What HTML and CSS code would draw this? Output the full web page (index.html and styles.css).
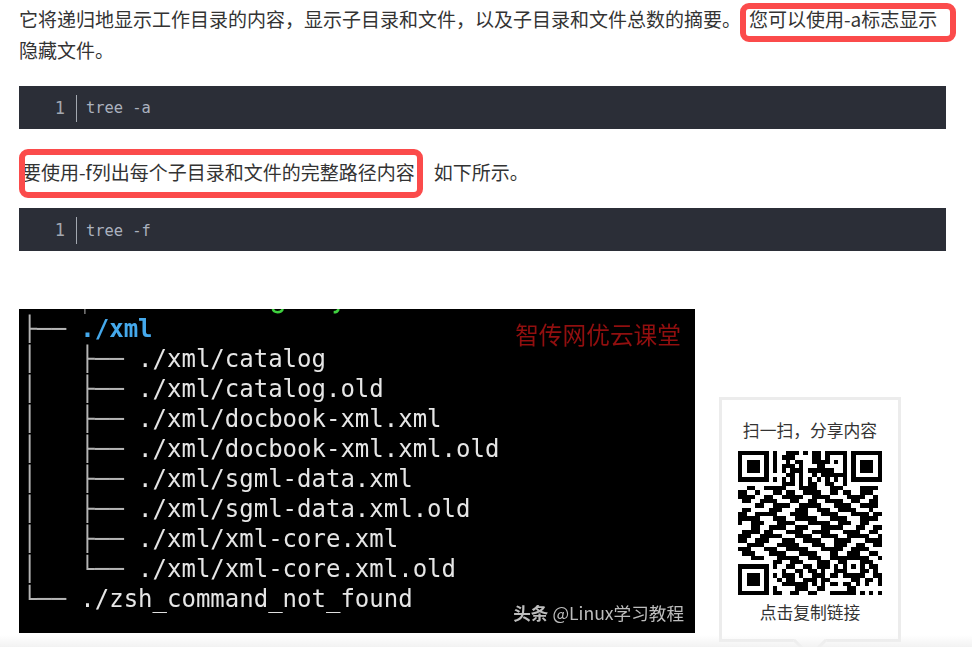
FILE: index.html
```html
<!DOCTYPE html>
<html lang="zh-CN">
<head>
<meta charset="utf-8">
<title>tree</title>
<link rel="stylesheet" href="styles.css">
</head>
<body>
<main class="article">
  <p class="para para-first">它将递归地显示工作目录的内容，显示子目录和文件，以及子目录和文件总数的摘要。<span class="mark mark-a">您可以使用-a标志显示</span>隐藏文件。</p>
  <div class="code"><span class="num">1</span><code class="src">tree -a</code></div>
  <p class="para para-second"><span class="mark mark-f">要使用-f列出每个子目录和文件的完整路径内容</span><span class="rest">如下所示。</span></p>
  <div class="code code-second"><span class="num">1</span><code class="src">tree -f</code></div>
  <figure class="shot">
    <svg class="shot-top" viewBox="0 0 676 6" width="676" height="6" aria-hidden="true">
      <path d="M11.5 0v6" stroke="#b5b5b5" stroke-width="1.2" fill="none"/>
      <path d="M237 0c1 5 10 5 12 0" stroke="#3fd13f" stroke-width="3" fill="none"/>
      <path d="M310 4c3 0 5-1 6-4" stroke="#3fd13f" stroke-width="3" fill="none"/>
    </svg>
<pre class="term"><i class="tree">├──</i> <b class="dir">./xml</b>
<i class="tree">│   ├──</i> ./xml/catalog
<i class="tree">│   ├──</i> ./xml/catalog.old
<i class="tree">│   ├──</i> ./xml/docbook-xml.xml
<i class="tree">│   ├──</i> ./xml/docbook-xml.xml.old
<i class="tree">│   ├──</i> ./xml/sgml-data.xml
<i class="tree">│   ├──</i> ./xml/sgml-data.xml.old
<i class="tree">│   ├──</i> ./xml/xml-core.xml
<i class="tree">│   └──</i> ./xml/xml-core.xml.old
<i class="tree">└──</i> ./zsh_command_not_found</pre>
    <span class="mark-top">智传网优云课堂</span>
    <span class="mark-bottom"><b>头条</b> @Linux学习教程</span>
  </figure>
</main>
<aside class="share">
  <div class="share-title">扫一扫，分享内容</div>
  <svg class="qr" viewBox="0 0 33 33" width="144" height="144" aria-label="QR"><path id="qr-path" fill="#000" shape-rendering="crispEdges" d=""/></svg>
  <div class="share-link">点击复制链接</div>
</aside>
<div class="fade"></div>
<script src="qr.js"></script>
</body>
</html>
```

FILE: styles.css
```css
html, body {
  margin: 0;
  height: 647px;
  overflow: hidden;
  background: #fff;
}
body {
  position: relative;
  color: #333;
  font-family: "Noto Sans CJK SC", sans-serif;
}
.article {
  padding: 3px 26px 0 19px;
}
.para {
  margin: 0;
  font-size: 19px;
  line-height: 31px;
}
.para-second {
  margin-top: 27px;
}
.mark {
  position: relative;
  display: inline;
}
.mark-a {
  margin-left: 8px;
}
.mark-f {
  margin-left: 3px;
}
.mark-a::after,
.mark-f::after {
  content: "";
  position: absolute;
  border: 6px solid #fb4b4b;
  border-radius: 9px;
  box-sizing: border-box;
}
.mark-a::after {
  left: -9px;
  right: -19px;
  top: -2px;
  bottom: -10px;
}
.mark-f::after {
  left: -3px;
  right: -8px;
  top: -9px;
  bottom: -13px;
}
.rest {
  margin-left: 19px;
}
.code {
  display: flex;
  align-items: center;
  height: 43px;
  box-sizing: border-box;
  margin-top: 21px;
  padding-top: 1px;
  background: #2b2e37;
  font-family: "DejaVu Sans Mono", monospace;
  font-size: 15.4px;
}
.code-second {
  padding-top: 2px;
}
.num {
  width: 58px;
  padding-right: 11px;
  box-sizing: border-box;
  flex: none;
  text-align: right;
  color: #a3a8b0;
  font-size: 17px;
  line-height: 27px;
  border-right: 1px solid #a3a8b0;
}
.src {
  margin-left: 9px;
  font-family: inherit;
  color: #abb2bf;
}
.shot {
  position: relative;
  width: 676px;
  height: 324px;
  margin: 58px 0 0;
  background: #000;
  overflow: hidden;
}
.shot-top {
  display: block;
  height: 5px;
}
.term {
  margin: 0 0 0 3.5px;
  font-family: "DejaVu Sans Mono", monospace;
  font-size: 24px;
  line-height: 30px;
  color: #e6e6e6;
  filter: blur(0.5px);
}
.tree {
  font-style: normal;
  color: #b5b5b5;
}
.dir {
  color: #45a9ec;
}
.mark-top {
  position: absolute;
  top: 11px;
  right: 14px;
  font-size: 23.7px;
  line-height: 28px;
  color: #920f0f;
  filter: blur(0.4px);
}
.mark-bottom {
  position: absolute;
  right: 11px;
  bottom: 8px;
  font-size: 17.6px;
  line-height: 24px;
  color: #bdbdbd;
  filter: blur(0.3px);
}
.share {
  position: absolute;
  left: 719px;
  top: 397px;
  width: 182px;
  height: 245px;
  box-sizing: border-box;
  border: 3px solid #ececec;
  background: #fff;
  display: flex;
  flex-direction: column;
  align-items: center;
  padding-top: 18px;
  font-size: 16.8px;
  line-height: 24px;
  color: #333;
}
.share::after {
  content: "";
  position: absolute;
  left: 76px;
  bottom: -14px;
  width: 21px;
  height: 21px;
  background: #fff;
  border-right: 3px solid #ececec;
  border-bottom: 3px solid #ececec;
  transform: rotate(45deg);
}
.qr {
  display: block;
  margin-top: 9px;
}
.share-link {
  margin-top: 5px;
}
.fade {
  position: absolute;
  left: 0;
  right: 0;
  bottom: 0;
  height: 12px;
  background: linear-gradient(to bottom, rgba(240, 240, 240, 0), rgba(240, 240, 240, 0.85));
  pointer-events: none;
}
```

FILE: qr.js
```js
var rows = [
  "1111111 0 10011101011011111 0 1111111",
  "1000001 0 10111000011010001 0 1000001",
  "1011101 0 10010110011110101 0 1011101",
  "1011101 0 10111010001100001 0 1011101",
  "1011101 0 10101110111111001 0 1011101",
  "1000001 0 00011010010111111 0 1000001",
  "1111111 0 10101010101010101 0 1111111",
  "00000000 00111010110011001 0 0000000",
  "001100111110001111000111000011110",
  "110010001101100111100110110011100",
  "111100110011111001111000011110010",
  "011001111000110011001111001100110",
  "000011001111001111100011110011110",
  "011000011100011100111001111000100",
  "110011111000111100011110001111011",
  "111110001110011111000111100011110",
  "100111000111100011111001110011000",
  "000110011110011100011111000110011",
  "011110110001111001111000111100110",
  "111001111100011110011110011111001",
  "110011100011100111100011110001111",
  "001111000111110001110011100110011",
  "111000111001111100011111001111000",
  "011100011110001111000110011100110",
  "000111000111110011100111 11111 1001",
  "00000000 1100111000111001 10001 1100",
  "11111110 1001100110111010 10101 0110",
  "10000010 0010011011010011 10001 1010",
  "10111010 1011101001110110 11111 0011",
  "10111010 0101100111011000 00110 1101",
  "10111010 0011111101010110 11010 1001",
  "10000010 1000011100110000 01100 0000",
  "11111110 1100110011000111 11101 0101"
];
var d = "";
rows.forEach(function (row, y) {
  row.replace(/ /g, "").split("").forEach(function (c, x) {
    if (c === "1") d += "M" + x + " " + y + "h1v1h-1z";
  });
});
document.getElementById("qr-path").setAttribute("d", d);
```
